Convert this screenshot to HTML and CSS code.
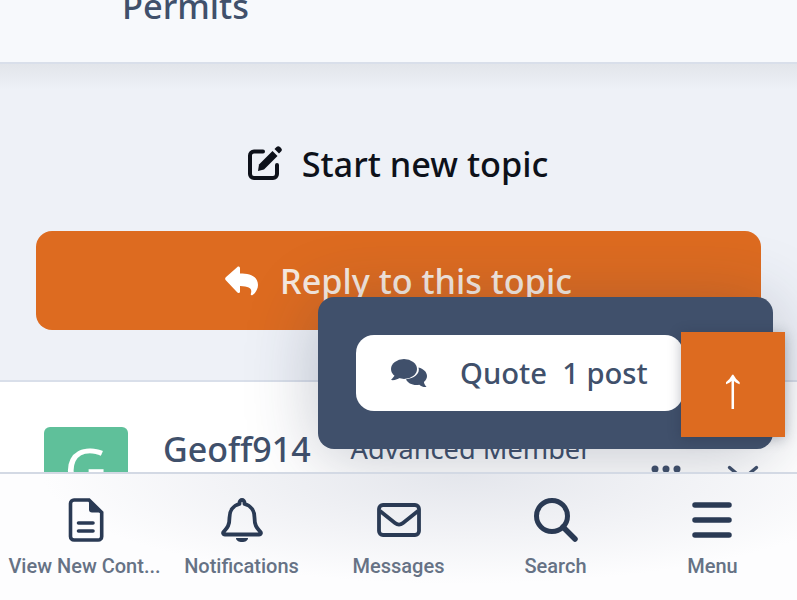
FILE: index.html
```html
<!DOCTYPE html>
<html lang="en">
<head>
    <meta charset="UTF-8">
    <meta name="viewport" content="width=device-width, initial-scale=1.0">
    <title>Topic</title>
    <link rel="stylesheet" href="styles.css">
</head>
<body>
    <div class="page">
        <div class="topic-card">
            <span class="topic-title">Permits</span>
        </div>

        <div class="actions">
            <a class="start-topic">
                <svg class="start-icon" viewBox="0 0 34 34">
                    <path d="M15 5.500H6a4 4 0 0 0-4 4V28a4 4 0 0 0 4 4h19a4 4 0 0 0 4-4v-9" fill="none" stroke="#0d111a" stroke-width="4" stroke-linecap="round"/>
                    <path d="M11 18.500 24.500 5l5 5L16 23.500 10 25z" fill="#0d111a"/>
                    <path d="M26.500 3 28.500 1a2.500 2.500 0 0 1 3.500 0l1 1a2.500 2.500 0 0 1 0 3.500l-2 2z" fill="#0d111a"/>
                </svg>
                <span>Start new topic</span>
            </a>
            <a class="reply-btn">
                <svg class="reply-icon" viewBox="0 0 34 30">
                    <path d="M0.8 11.200 12.400 0.900c1-.9 2.600-.2 2.600 1.200v5.400c9.500.1 18 2.200 18 11.600 0 4-2.400 7.800-5.400 10-.9.600-2.100-.2-1.800-1.200 1.700-5.500-.8-7.600-10.800-8v5.500c0 1.400-1.600 2.100-2.600 1.200L.8 14.200c-.9-.8-.9-2.200 0-3z" fill="#fff"/>
                </svg>
                <span>Reply to this topic</span>
            </a>
        </div>

        <div class="post">
            <div class="avatar">G</div>
            <span class="post-author">Geoff914</span>
            <span class="post-rank">Advanced Member</span>
            <div class="post-tools">
                <svg class="dots" viewBox="0 0 30 8">
                    <circle cx="4" cy="4" r="3.500"/><circle cx="15" cy="4" r="3.500"/><circle cx="26" cy="4" r="3.500"/>
                </svg>
                <svg class="chevron" viewBox="0 0 32 18">
                    <path d="M2.500 2.500 16 14 29.500 2.500" fill="none" stroke="#40506b" stroke-width="3.400" stroke-linecap="round"/>
                </svg>
            </div>
        </div>

        <div class="quote-bar">
            <a class="quote-pill">
                <svg class="quote-icon" viewBox="0 0 36 29">
                    <ellipse cx="13" cy="10" rx="13" ry="10" fill="#40506b"/>
                    <path d="M5 15 0 21c3 .5 7-.5 10-3z" fill="#40506b"/>
                    <path d="M27.500 8.500C32.400 9.700 36 13 36 17c0 2.400-1.200 4.500-3.100 6 .2 1.800 1.200 3.400 2.600 5-2.600.3-5.300-.6-7.200-2.300-1 .2-1.800.3-2.800.3-5 0-9.200-2.400-10.500-5.800 7.700-.7 14.500-5.300 12.500-11.700z" fill="#40506b"/>
                </svg>
                <span class="quote-text">Quote&nbsp; 1 post</span>
            </a>
        </div>
        <a class="to-top">↑</a>

        <nav class="bottom-nav">
            <a class="nav-item">
                <svg class="nav-icon" viewBox="0 0 44 44">
                    <path d="M11 2h15l12.700 12.500V38.500a3.500 3.500 0 0 1-3.500 3.500H11a3.500 3.500 0 0 1-3.500-3.500V5.500A3.500 3.500 0 0 1 11 2z" fill="none" stroke="#2a3a54" stroke-width="3.600"/>
                    <path d="M26 1.500 39.500 14.500H29a3 3 0 0 1-3-3z" fill="#2a3a54"/>
                    <path d="M15.500 25h14.500M15.500 33h14.500" stroke="#2a3a54" stroke-width="3.600" stroke-linecap="round"/>
                </svg>
                <span class="nav-label">View New Cont...</span>
            </a>
            <a class="nav-item">
                <svg class="nav-icon" viewBox="0 0 44 44">
                    <path d="M22 2a2.500 2.500 0 0 0-2.500 2.500V6C13 7.500 9.500 13 9.500 19.500c0 8.500-2.500 10.500-6 14.500-.9 1.100-.2 2.500 1.300 2.500h34.400c1.500 0 2.200-1.400 1.300-2.500-3.500-4-6-6-6-14.500C34.500 13 31 7.500 24.500 6V4.500A2.500 2.500 0 0 0 22 2z" fill="none" stroke="#2a3a54" stroke-width="3.800" stroke-linejoin="round"/>
                    <path d="M16 40h12c0 2.500-2.700 4-6 4s-6-1.500-6-4z" fill="#2a3a54"/>
                </svg>
                <span class="nav-label">Notifications</span>
            </a>
            <a class="nav-item">
                <svg class="nav-icon" viewBox="0 0 44 44">
                    <rect x="2" y="7" width="40" height="30" rx="4" fill="none" stroke="#2a3a54" stroke-width="3.800"/>
                    <path d="M3 13 18 25c2.500 2 5.500 2 8 0L41 13" fill="none" stroke="#2a3a54" stroke-width="3.800"/>
                </svg>
                <span class="nav-label">Messages</span>
            </a>
            <a class="nav-item">
                <svg class="nav-icon" viewBox="0 0 44 44">
                    <circle cx="18" cy="18" r="15.500" fill="none" stroke="#2a3a54" stroke-width="5"/>
                    <path d="M29 29 41 41" stroke="#2a3a54" stroke-width="5.500" stroke-linecap="round"/>
                </svg>
                <span class="nav-label">Search</span>
            </a>
            <a class="nav-item">
                <svg class="nav-icon" viewBox="0 0 44 44">
                    <path d="M4 7h34M4 22h34M4 37h34" stroke="#2a3a54" stroke-width="5.500" stroke-linecap="round"/>
                </svg>
                <span class="nav-label">Menu</span>
            </a>
        </nav>
    </div>
</body>
</html>
```

FILE: styles.css
```css
html, body {
    margin: 0;
    padding: 0;
}
body {
    font-family: "Noto Sans", "Open Sans", Arial, sans-serif;
    background: #eef1f7;
}
.page {
    position: relative;
    width: 797px;
    height: 600px;
    overflow: hidden;
    background: #eef1f7;
}
.topic-card {
    height: 62px;
    display: flex;
    align-items: flex-end;
    padding-left: 122px;
    background: #f7f9fc;
    border-bottom: 2px solid #d9dfea;
    overflow: hidden;
}
.topic-title {
    font-size: 34.400px;
    font-weight: 500;
    line-height: 40px;
    margin-bottom: 36px;
    color: #40506b;
}
.actions {
    height: 318px;
    box-sizing: border-box;
    padding: 74px 36px 0;
    background: linear-gradient(180deg, #e2e5ea 0, #eef1f7 26px, #eef1f7 100%);
    border-bottom: 2px solid #d9dfea;
}
.start-topic {
    display: flex;
    justify-content: center;
    align-items: center;
    gap: 20px;
    height: 50px;
    padding-right: 1px;
    font-size: 34.300px;
    font-weight: 500;
    color: #0d111a;
}
.start-icon {
    width: 34px;
    height: 34px;
}
.reply-btn {
    display: flex;
    justify-content: center;
    align-items: center;
    gap: 21px;
    height: 99px;
    margin-top: 43px;
    border-radius: 16px;
    background: #dd6b20;
    font-size: 34.200px;
    font-weight: 500;
    color: #f6e9df;
}
.reply-icon {
    width: 34px;
    height: 30px;
}
.post {
    display: flex;
    align-items: flex-start;
    height: 218px;
    padding: 45px 0 0 44px;
    background: #fff;
}
.avatar {
    width: 84px;
    height: 84px;
    border-radius: 6px;
    background: #5fc09a;
    color: #fff;
    font-size: 60px;
    line-height: 84px;
    text-align: center;
}
.post-author {
    margin-left: 35px;
    font-size: 34px;
    font-weight: 500;
    line-height: 44px;
    color: #40506b;
}
.post-rank {
    margin-left: 40px;
    font-size: 27.200px;
    line-height: 44px;
    color: #40506b;
}
.post-tools {
    position: absolute;
    top: 465px;
    left: 651px;
    display: flex;
    align-items: flex-start;
    gap: 46px;
}
.dots {
    width: 30px;
    height: 8px;
    fill: #40506b;
}
.chevron {
    width: 32px;
    height: 18px;
}
.quote-bar {
    position: absolute;
    left: 318px;
    top: 297px;
    width: 455px;
    height: 152px;
    box-sizing: border-box;
    padding: 38px 0 0 38px;
    border-radius: 16px;
    background: #40506b;
    box-shadow: 0 8px 70px rgba(40, 50, 80, 0.28);
}
.quote-pill {
    display: flex;
    align-items: center;
    width: 327px;
    height: 76px;
    box-sizing: border-box;
    padding-left: 35px;
    border-radius: 18px;
    background: #fff;
}
.quote-icon {
    width: 36px;
    height: 29px;
}
.quote-text {
    margin-left: 33px;
    font-size: 29.200px;
    font-weight: 500;
    color: #40506b;
}
.to-top {
    position: absolute;
    left: 681px;
    top: 332px;
    width: 104px;
    height: 105px;
    display: flex;
    justify-content: center;
    align-items: center;
    background: #dd6b20;
    box-shadow: 0 2px 12px rgba(30, 40, 60, 0.3);
    font-size: 58px;
    line-height: 1;
    color: #fff;
}
.bottom-nav {
    position: absolute;
    left: 0;
    right: 0;
    top: 472px;
    height: 128px;
    box-sizing: border-box;
    display: grid;
    grid-template-columns: repeat(5, 1fr);
    padding: 24px 6px 0 6px;
    background: radial-gradient(ellipse 420px 110px at 58% 0, #e4e6ec, #fdfdfe 100%);
    border-top: 2px solid #d3d9e4;
}
.nav-item {
    display: flex;
    flex-direction: column;
    align-items: center;
    gap: 12px;
}
.nav-icon {
    width: 44px;
    height: 44px;
}
.nav-label {
    font-family: Roboto, "Liberation Sans", sans-serif;
    font-size: 20px;
    font-weight: 500;
    line-height: 24px;
    color: #667285;
    white-space: nowrap;
}
```
